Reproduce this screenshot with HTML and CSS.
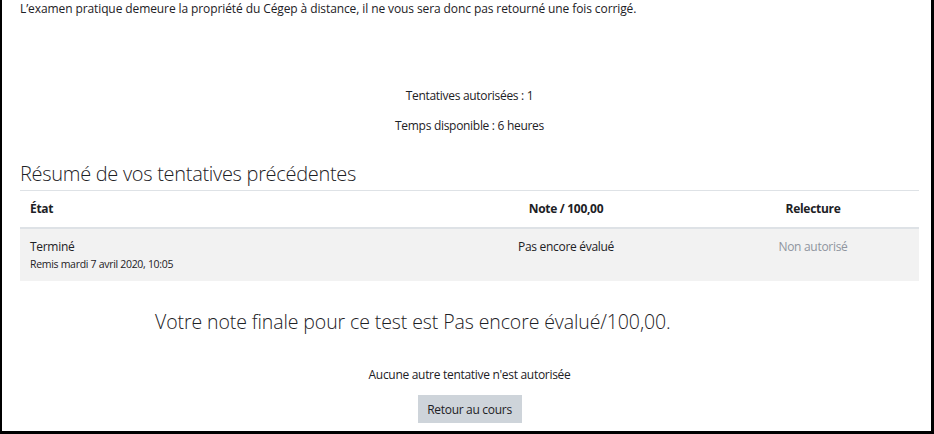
FILE: index.html
```html
<!DOCTYPE html>
<html lang="fr">
<head>
<meta charset="utf-8">
<title>Test</title>
<link rel="stylesheet" href="styles.css">
</head>
<body>
<div class="page">
  <p class="intro">L’examen pratique demeure la propriété du Cégep à distance, il ne vous sera donc pas retourné une fois corrigé.</p>
  <div class="info">
    <p>Tentatives autorisées : 1</p>
    <p>Temps disponible : 6 heures</p>
  </div>
  <h3 class="summary-title">Résumé de vos tentatives précédentes</h3>
  <table class="attempts">
    <thead>
      <tr>
        <th class="c-state">État</th>
        <th class="c-grade">Note / 100,00</th>
        <th class="c-review">Relecture</th>
      </tr>
    </thead>
    <tbody>
      <tr>
        <td class="c-state">Terminé<span class="submitted">Remis mardi 7 avril 2020, 10:05</span></td>
        <td class="c-grade">Pas encore évalué</td>
        <td class="c-review muted">Non autorisé</td>
      </tr>
    </tbody>
  </table>
  <h3 class="final">Votre note finale pour ce test est Pas encore évalué/100,00.</h3>
  <p class="noattempt">Aucune autre tentative n'est autorisée</p>
  <div class="actions"><button class="btn" type="button">Retour au cours</button></div>
</div>
</body>
</html>
```
FILE: styles.css
```css
html, body {
  margin: 0;
  padding: 0;
  background: #fff;
}
body {
  width: 934px;
  height: 434px;
  box-sizing: border-box;
  border-left: 2px solid #000;
  border-right: 3px solid #000;
  border-bottom: 3px solid #000;
  overflow: hidden;
  font-family: "Open Sans", "Noto Sans", sans-serif;
  font-size: 12px;
  letter-spacing: -0.3px;
  color: #1d2125;
}
.page {
  padding: 0 12px 0 18px;
}
p { margin: 0; }
.intro {
  line-height: 18px;
  height: 18px;
  letter-spacing: -0.1px;
}
.info {
  margin-top: 69px;
  text-align: center;
  display: flex;
  flex-direction: column;
  gap: 12px;
}
.info p { line-height: 18px; }
.summary-title {
  margin: 26px 0 0;
  font-weight: 300;
  font-size: 20px;
  letter-spacing: -0.3px;
  line-height: 25px;
  color: #1d2125;
  padding-bottom: 4px;
  border-bottom: 1px solid #dee2e6;
}
.attempts {
  width: 100%;
  border-collapse: collapse;
}
.attempts th, .attempts td {
  padding: 9px 10px;
  line-height: 18px;
  vertical-align: top;
}
.attempts th {
  font-weight: 700;
  border-bottom: 2px solid #dee2e6;
}
.attempts tbody tr {
  background: #f2f2f2;
}
.attempts td { height: 33px; }
.c-state { text-align: left; width: 385px; }
.c-grade { text-align: center; width: 262px; }
.c-review { text-align: center; }
.muted { color: #8f959e; }
.submitted {
  display: block;
  font-size: 10.5px;
  line-height: 16px;
}
.final {
  margin: 28px 0 0;
  padding-left: 135px;
  font-weight: 300;
  font-size: 19.5px;
  letter-spacing: -0.1px;
  line-height: 26px;
  color: #1d2125;
}
.noattempt {
  margin-top: 31px;
  text-align: center;
  line-height: 18px;
}
.actions {
  margin-top: 11px;
  text-align: center;
}
.btn {
  font: inherit;
  letter-spacing: -0.3px;
  color: #1d2125;
  background: #ced4da;
  border: 0;
  border-radius: 0;
  width: 104px;
  height: 28px;
  padding: 0;
}
```
